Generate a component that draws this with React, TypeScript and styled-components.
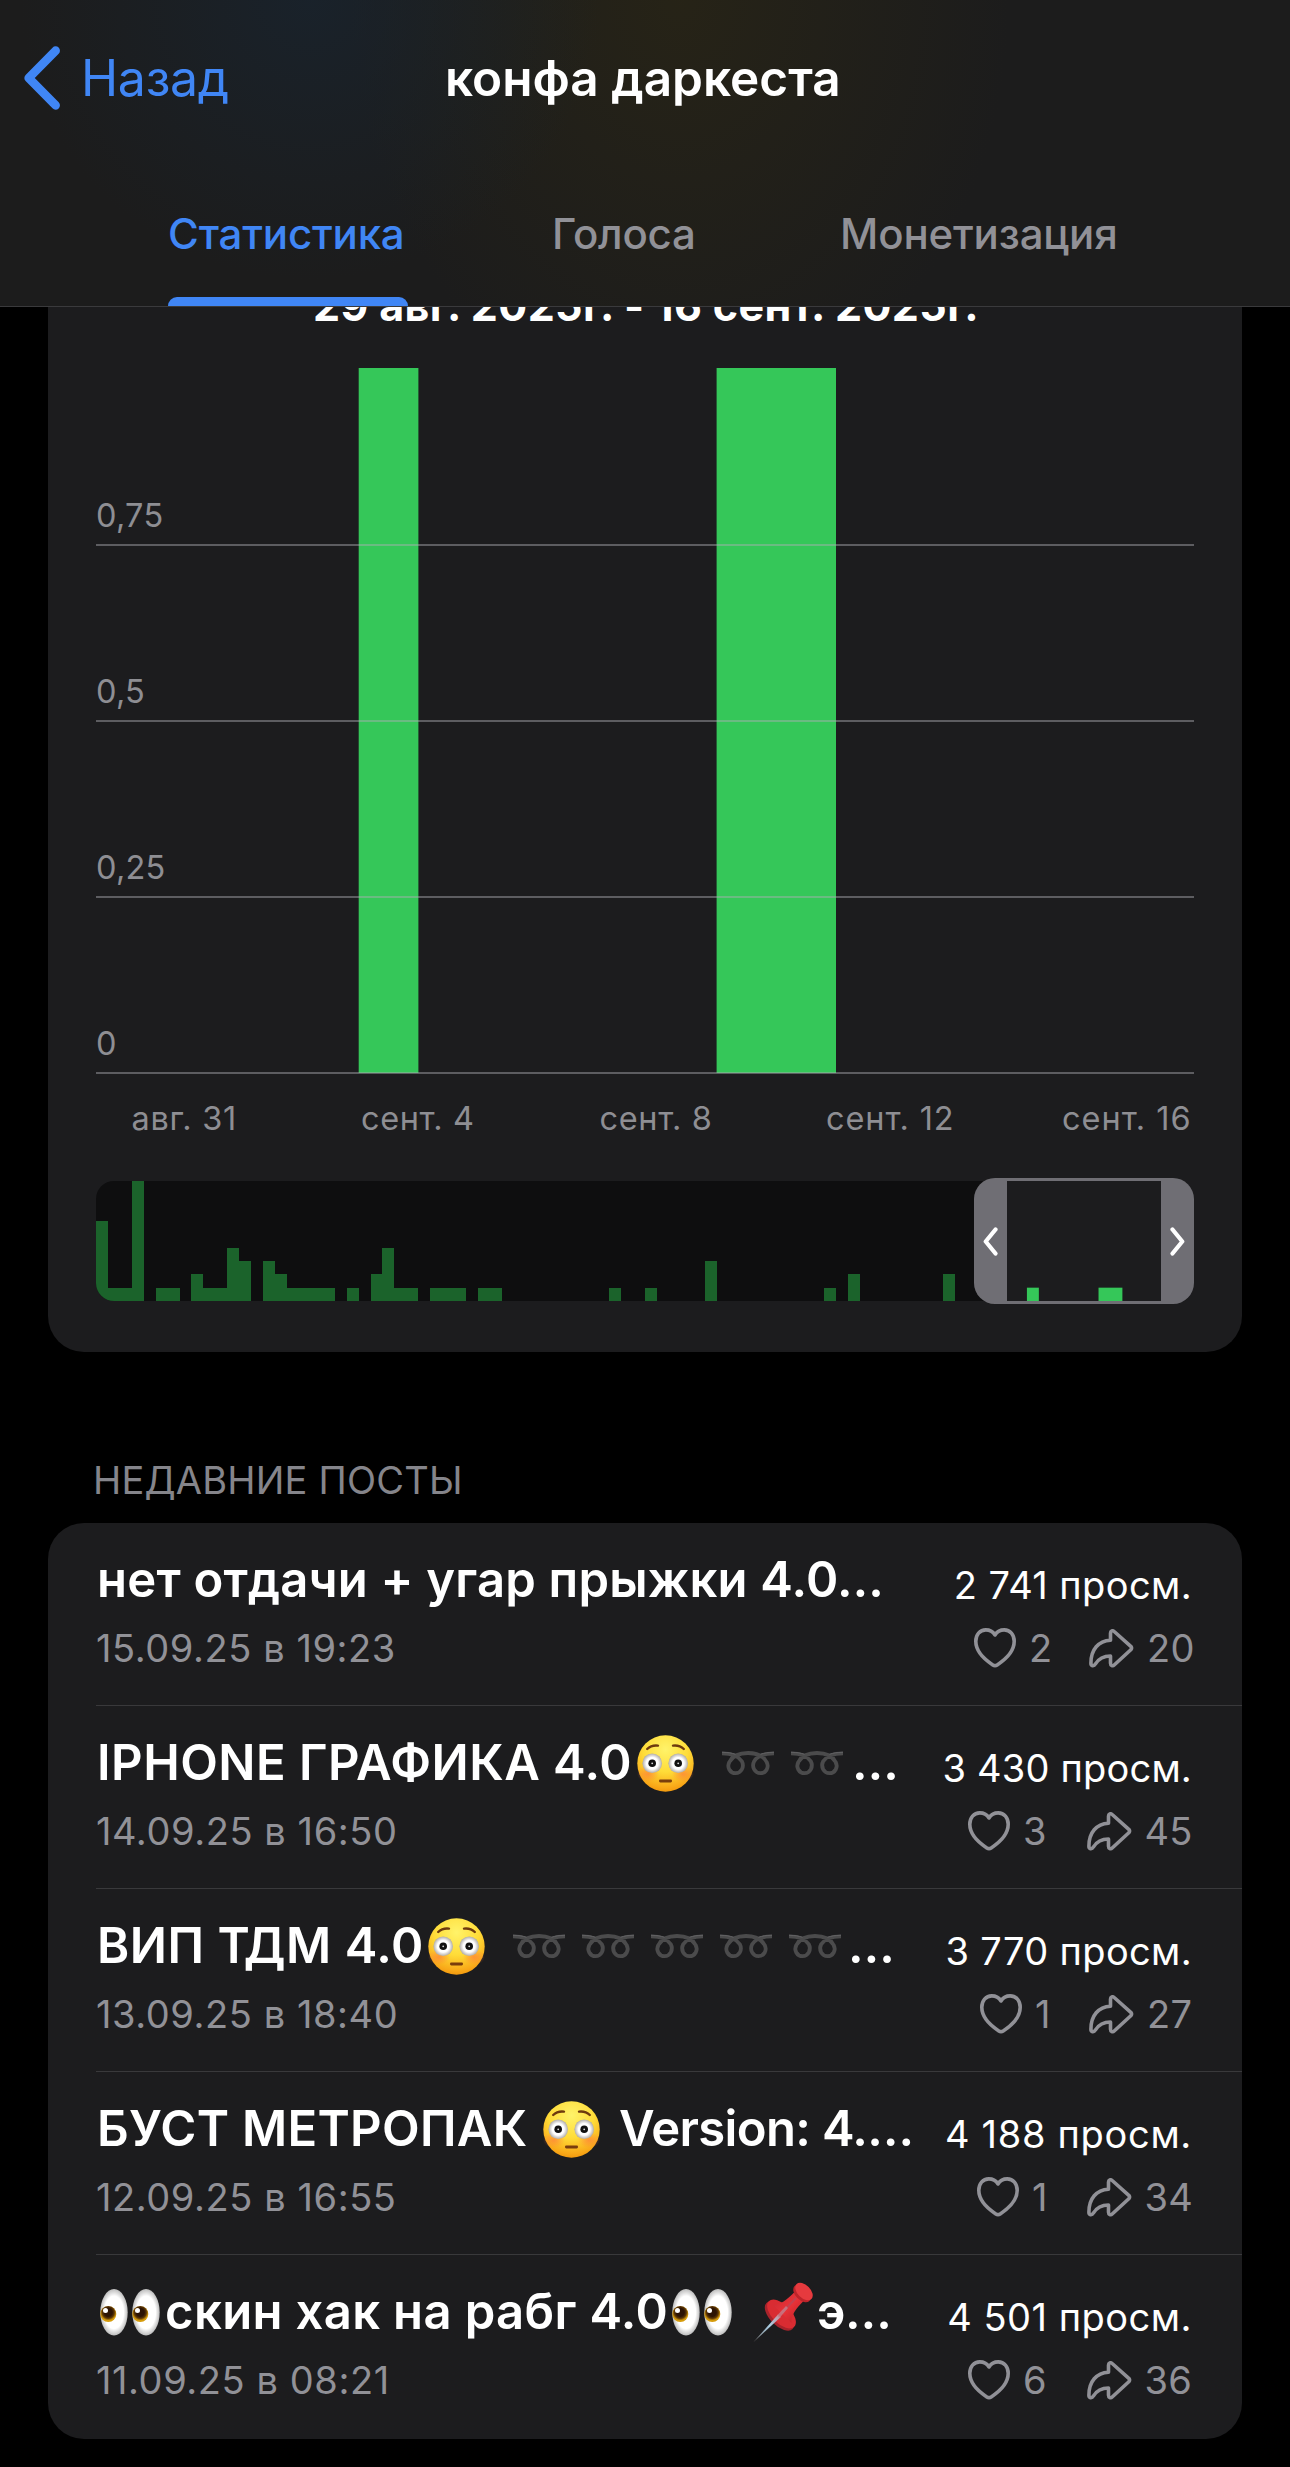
import React from "react";
import styled, { createGlobalStyle } from "styled-components";

const GlobalStyle = createGlobalStyle`
  * { box-sizing: border-box; }
  body {
    margin: 0;
    background: #000;
    color: #fff;
    font-family: Inter, "Liberation Sans", sans-serif;
  }
`;

const Page = styled.div`
  width: 1290px;
  height: 2467px;
  overflow: hidden;
  background: #000;
`;

const Header = styled.header`
  height: 307px;
  border-bottom: 1px solid #3a3a3c;
  background:
    radial-gradient(ellipse 290px 280px at 310px 0, rgba(24, 37, 50, 0.65), rgba(24, 37, 50, 0) 100%),
    radial-gradient(ellipse 330px 420px at 680px 0, rgba(44, 39, 20, 0.65), rgba(44, 39, 20, 0) 100%),
    #1c1c1c;
`;

const NavBar = styled.div`
  display: grid;
  grid-template-columns: 420px 450px 420px;
  align-items: center;
  height: 156px;
`;

const BackButton = styled.div`
  display: flex;
  align-items: center;
  gap: 21px;
  padding-left: 24px;
  color: #4086f5;
`;

const Text = styled.span<{ size: number; weight?: number; spacing?: number; color?: string; width?: number }>`
  display: block;
  flex: none;
  white-space: pre;
  line-height: 50px;
  font-size: ${(p) => p.size}px;
  font-weight: ${(p) => p.weight ?? 400};
  letter-spacing: ${(p) => p.spacing ?? 0}px;
  color: ${(p) => p.color ?? "inherit"};
  width: ${(p) => (p.width ? `${p.width}px` : "auto")};
`;

const NavTitle = styled.div`
  display: flex;
  justify-content: flex-start;
  padding-left: 25px;
`;

const Tabs = styled.nav`
  display: flex;
  gap: 144px;
  height: 150px;
  padding-left: 168px;
`;

const Tab = styled.div<{ $active?: boolean; $width: number }>`
  display: flex;
  flex-direction: column;
  justify-content: space-between;
  width: ${(p) => p.$width}px;
  padding-top: 53px;
  color: ${(p) => (p.$active ? "#4086f5" : "#919197")};
  &::after {
    content: "";
    height: 9px;
    border-radius: 9px 9px 0 0;
    background: ${(p) => (p.$active ? "#4086f5" : "transparent")};
  }
`;

const ChartCard = styled.section`
  height: 1045px;
  margin: 0 48px;
  padding: 0 48px;
  overflow: hidden;
  border-radius: 0 0 36px 36px;
  background: #1c1c1e;
`;

const ChartTitle = styled.div`
  display: flex;
  height: 50px;
  margin: -27px 0 38px;
  padding-left: 217px;
`;

const Plot = styled.svg`
  display: block;
  width: 1098px;
  height: 782px;
  overflow: visible;
`;

const AxisLabel = styled.text<{ $spacing?: number }>`
  fill: #8e8e93;
  font-size: 32.5px;
  letter-spacing: ${(p) => p.$spacing ?? 0}px;
`;

const RangeBar = styled.div`
  position: relative;
  height: 120px;
  margin-top: 31px;
`;

const Overview = styled.svg`
  display: block;
  width: 1098px;
  height: 120px;
  border-radius: 18px;
  background: #0e0e0f;
`;

const RangeWindow = styled.div`
  position: absolute;
  top: -3px;
  right: 0;
  display: flex;
  justify-content: space-between;
  width: 220px;
  height: 126px;
  overflow: hidden;
  border-radius: 21px;
  background: #1c1c1e;
`;

const Handle = styled.div`
  display: flex;
  align-items: center;
  justify-content: center;
  width: 33px;
  background: #6f6e74;
`;

const RangeBars = styled.svg`
  flex: 1;
  height: 126px;
  border-top: 3px solid #6f6e74;
  border-bottom: 3px solid #6f6e74;
`;

const SectionLabel = styled.h2`
  height: 171px;
  margin: 0;
  padding: 103px 0 0 93px;
`;

const PostList = styled.section`
  height: 916px;
  margin: 0 48px;
  padding-left: 48px;
  border-radius: 36px;
  background: #1c1c1e;
`;

const Post = styled.article`
  display: flex;
  justify-content: space-between;
  width: 1146px;
  height: 183px;
  padding-right: 50px;
  border-bottom: 1px solid #39393b;
  &:last-child { border-bottom-color: transparent; }
`;

const Main = styled.div`
  display: flex;
  flex-direction: column;
  gap: 18px;
  padding-top: 32px;
`;

const Side = styled.div`
  display: flex;
  flex-direction: column;
  align-items: flex-end;
  gap: 13px;
  padding-top: 37px;
`;

const TitleLine = styled.div`
  display: flex;
  align-items: center;
  height: 50px;
  padding-left: 1px;
`;

const Slot = styled.span<{ $left: number; $right: number }>`
  display: flex;
  flex: none;
  margin-left: ${(p) => p.$left}px;
  margin-right: ${(p) => p.$right}px;
`;

const Stats = styled.div`
  display: flex;
  align-items: center;
  height: 50px;
  color: #919197;
`;

const Count = styled.span<{ $width: number; $after?: number }>`
  width: ${(p) => p.$width}px;
  margin: 0 ${(p) => p.$after ?? 0}px 0 13px;
  font-size: 38px;
  line-height: 50px;
  letter-spacing: 0.3px;
  white-space: nowrap;
`;

const Face = () => (
  <svg width="57" height="57" viewBox="0 0 57 57" role="img" aria-label="😳">
    <defs>
      <radialGradient id="skin" cx="0.5" cy="0.25" r="0.8">
        <stop offset="0" stopColor="#fff36a" />
        <stop offset="0.5" stopColor="#ffdc38" />
        <stop offset="0.85" stopColor="#f9a818" />
        <stop offset="1" stopColor="#ee9008" />
      </radialGradient>
      <radialGradient id="cheek">
        <stop offset="0" stopColor="#ff7a3c" stopOpacity="0.65" />
        <stop offset="1" stopColor="#ff7a3c" stopOpacity="0" />
      </radialGradient>
      <radialGradient id="ball">
        <stop offset="0.6" stopColor="#fff" />
        <stop offset="1" stopColor="#b0aca8" />
      </radialGradient>
    </defs>
    <circle cx="28.5" cy="28.5" r="28.2" fill="url(#skin)" />
    <ellipse cx="11" cy="39" rx="11" ry="8" fill="url(#cheek)" />
    <ellipse cx="46" cy="39" rx="11" ry="8" fill="url(#cheek)" />
    {[15.2, 41.2].map((x) => (
      <g key={x}>
        <circle cx={x} cy="28.3" r="9.8" fill="url(#ball)" />
        <circle cx={x} cy="28.3" r="3.8" fill="#111" />
        <circle cx={x} cy="28.3" r="0.9" fill="#ddd" />
      </g>
    ))}
    <path d="M10.2 14 Q14.5 9.8 21 10.6 M36 10.6 Q42.5 9.8 46.8 14" fill="none" stroke="#6e3a0e" strokeWidth="2.4" strokeLinecap="round" />
    <rect x="22" y="44.4" width="13" height="3" rx="1.3" fill="#7a3d0c" />
  </svg>
);

const Loop = () => (
  <svg width="52" height="25" viewBox="0 0 52 25" role="img" aria-label="➿">
    <path
      d="M0 2.4C9 2.4 16.5 5 19.8 10.2C22.8 16 19 22.2 13.6 22.2C7.8 22.2 4.6 16 7.4 11C10.5 5 18 2 26 2C34 2 41.5 5 44.6 11C47.4 16 44.2 22.2 38.4 22.2C33 22.2 29.2 16 32.2 10.2C35.5 5 43 2.4 52 2.4"
      fill="none"
      stroke="#4b4b4c"
      strokeWidth="3.8"
    />
    <path d="M0 1.3C6 1.4 10 2 13.5 3.3M52 1.3C46 1.4 42 2 38.5 3.3" fill="none" stroke="#626264" strokeWidth="1" />
  </svg>
);

const Eyes = () => (
  <svg width="60" height="47" viewBox="0 0 60 47" role="img" aria-label="👀">
    <defs>
      <radialGradient id="white">
        <stop offset="0.7" stopColor="#fff" />
        <stop offset="1" stopColor="#bdbdbd" />
      </radialGradient>
      <radialGradient id="iris" cx="0.5" cy="0.4">
        <stop offset="0.5" stopColor="#2d1404" />
        <stop offset="0.75" stopColor="#5c3603" />
        <stop offset="1" stopColor="#d59b0c" />
      </radialGradient>
    </defs>
    {[0, 32].map((dx) => (
      <g key={dx} transform={`translate(${dx} 0)`}>
        <ellipse cx="14" cy="23.3" rx="13.7" ry="23.2" fill="url(#white)" />
        <circle cx="8.3" cy="25" r="8" fill="url(#iris)" />
        <circle cx="5.5" cy="21.5" r="2.5" fill="#fff" />
      </g>
    ))}
  </svg>
);

const Pin = () => (
  <svg width="61" height="61" viewBox="0 0 61 61" role="img" aria-label="📌">
    <defs>
      <linearGradient id="needle" x1="0" y1="1" x2="1" y2="0">
        <stop offset="0" stopColor="#77706e" />
        <stop offset="0.6" stopColor="#a9cfe6" />
        <stop offset="1" stopColor="#c98a94" />
      </linearGradient>
      <linearGradient id="barrel" x1="0" y1="0" x2="1" y2="1">
        <stop offset="0" stopColor="#c22a31" />
        <stop offset="0.5" stopColor="#e83238" />
        <stop offset="1" stopColor="#b81e24" />
      </linearGradient>
    </defs>
    <ellipse cx="26.5" cy="34" rx="18.5" ry="9.5" transform="rotate(45 26.5 34)" fill="#a8232b" />
    <ellipse cx="28.5" cy="32" rx="18" ry="9.5" transform="rotate(45 28.5 32)" fill="#d92c32" />
    <path d="M20 23 C28 23 34 17.500 42 9.500 L51 18.500 C43 26.500 38 33 38.500 41 Z" fill="url(#barrel)" />
    <ellipse cx="49" cy="11.5" rx="10.500" ry="6.5" transform="rotate(45 49 11.5)" fill="#bd242a" />
    <ellipse cx="51" cy="9.5" rx="10.500" ry="6.500" transform="rotate(45 51 9.5)" fill="#e63a3e" />
    <path d="M29 31 L43 16" stroke="#b5495a" strokeWidth="2" opacity="0.7" />
    <path d="M0.5 60 L25 32.5 L27.8 35 Z" fill="url(#needle)" />
    <path d="M24 33.5 L33 24 L35 26 L26.5 36 Z" fill="#c77d8a" opacity="0.8" />
  </svg>
);

const Heart = () => (
  <svg width="42" height="40" viewBox="0 0 42 40" fill="none" stroke="currentColor" strokeWidth="3.6" strokeLinejoin="round">
    <path d="M21 6.9C18.8 3.5 15.5 1.9 11.8 1.9C5.8 1.9 1.8 6.8 1.8 13.3C1.8 24.5 10.5 31.5 18.8 36.9Q21 38.3 23.2 36.9C31.5 31.5 40.2 24.5 40.2 13.3C40.2 6.8 36.2 1.9 30.2 1.9C26.5 1.9 23.2 3.5 21 6.9Z" />
  </svg>
);

const Share = () => (
  <svg width="45" height="39" viewBox="0 0 45 39" fill="none" stroke="currentColor" strokeWidth="3.6" strokeLinejoin="round">
    <path d="M21.5 11.2V4.2C21.5 1.9 23.7 1.1 25.2 2.5L41.8 17.3Q43.3 19 41.8 20.7L25.2 36C23.7 37.4 21.5 36.6 21.5 34.3V27C14 27 9.8 29.5 6.5 34.9C4.8 37.6 1.9 37 1.9 34.2C1.9 20.5 9.5 11.7 21.5 11.2Z" />
  </svg>
);

const Chevron = ({ flip }: { flip?: boolean }) => (
  <svg width="15" height="29" viewBox="0 0 15 29" fill="none" stroke="#fff" strokeWidth="4.2" strokeLinecap="round" strokeLinejoin="round">
    <path d={flip ? "M2.5 2.5L12.3 14.5L2.5 26.5" : "M12.5 2.5L2.7 14.5L12.5 26.5"} />
  </svg>
);

const STEP = 1098 / 92;
const UNIT = 120 / 9;

const history: number[] = [
  6, 1, 1, 9, 0, 1, 1, 0, 2, 1, 1, 4, 3, 0, 3, 2, 1, 1, 1, 1, 0, 1, 0, 2, 4, 1, 1, 0, 1, 1, 1, 0, 1, 1, 0, 0, 0, 0,
  0, 0, 0, 0, 0, 1, 0, 0, 1, 0, 0, 0, 0, 3, 0, 0, 0, 0, 0, 0, 0, 0, 0, 1, 0, 2, 0, 0, 0, 0, 0, 0, 0, 2,
];

const historyPath = history
  .map((v, i) => (v ? `M${i * STEP} 120v${-v * UNIT}h${STEP}v${v * UNIT}z` : ""))
  .join("");

const selected = [{ day: 78, days: 1 }, { day: 84, days: 2 }];

const ticks = [
  { label: "0,75", y: 177 },
  { label: "0,5", y: 353 },
  { label: "0,25", y: 529 },
  { label: "0", y: 705 },
];

const days = [
  { label: "авг. 31", x: 35.5, spacing: 0.7 },
  { label: "сент. 4", x: 265, spacing: 0.6 },
  { label: "сент. 8", x: 503.5, spacing: 0.65 },
  { label: "сент. 12", x: 730, spacing: 0.9 },
  { label: "сент. 16", x: 966, spacing: 1 },
];

type Part =
  | { text: string; width: number; spacing?: number }
  | { icon: "face" | "loop" | "eyes" | "pin"; left?: number; right?: number };

const icons = { face: Face, loop: Loop, eyes: Eyes, pin: Pin };

type PostData = {
  title: Part[];
  date: string;
  views: string;
  viewsSpacing: number;
  likes: number;
  likesWidth: number;
  shares: number;
  sharesWidth: number;
};

const posts: PostData[] = [
  {
    title: [{ text: "нет отдачи + угар прыжки 4.0…", width: 790, spacing: 0.2 }],
    date: "15.09.25 в 19:23", views: "2 741 просм.", viewsSpacing: 0.4,
    likes: 2, likesWidth: 24, shares: 20, sharesWidth: 45,
  },
  {
    title: [
      { text: "IPHONE ГРАФИКА 4.0", width: 540, spacing: 0.48 },
      { icon: "face" },
      { icon: "loop", left: 28 },
      { icon: "loop", left: 17, right: 9 },
      { text: "…", width: 45 },
    ],
    date: "14.09.25 в 16:50", views: "3 430 просм.", viewsSpacing: 0.2,
    likes: 3, likesWidth: 27.5, shares: 45, sharesWidth: 47.5,
  },
  {
    title: [
      { text: "ВИП ТДМ 4.0", width: 331, spacing: 0.55 },
      { icon: "face" },
      { icon: "loop", left: 28 },
      { icon: "loop", left: 17 },
      { icon: "loop", left: 17 },
      { icon: "loop", left: 17 },
      { icon: "loop", left: 17, right: 7 },
      { text: "…", width: 45 },
    ],
    date: "13.09.25 в 18:40", views: "3 770 просм.", viewsSpacing: 0.35,
    likes: 1, likesWidth: 18, shares: 27, sharesWidth: 45,
  },
  {
    title: [
      { text: "БУСТ МЕТРОПАК", width: 446, spacing: 0.3 },
      { icon: "face", right: 19 },
      { text: "Version: 4.…", width: 296, spacing: -0.65 },
    ],
    date: "12.09.25 в 16:55", views: "4 188 просм.", viewsSpacing: 0.7,
    likes: 1, likesWidth: 18.5, shares: 34, sharesWidth: 47.5,
  },
  {
    title: [
      { icon: "eyes", left: 3, right: 5 },
      { text: "скин хак на рабг 4.0", width: 507, spacing: 0.35 },
      { icon: "eyes", right: 21 },
      { icon: "pin", right: 3 },
      { text: "э…", width: 76, spacing: -0.5 },
    ],
    date: "11.09.25 в 08:21", views: "4 501 просм.", viewsSpacing: 0.5,
    likes: 6, likesWidth: 27.5, shares: 36, sharesWidth: 47.5,
  },
];

const Title = ({ parts }: { parts: Part[] }) => (
  <TitleLine>
    {parts.map((part, i) => {
      if ("text" in part) {
        return (
          <Text key={i} size={49} weight={600} spacing={part.spacing} width={part.width}>
            {part.text}
          </Text>
        );
      }
      const Icon = icons[part.icon];
      return (
        <Slot key={i} $left={part.left ?? 0} $right={part.right ?? 0}>
          <Icon />
        </Slot>
      );
    })}
  </TitleLine>
);

export default function App() {
  return (
    <Page>
      <GlobalStyle />
      <Header>
        <NavBar>
          <BackButton>
            <svg width="36" height="64" viewBox="0 0 36 64" fill="none" stroke="currentColor" strokeWidth="8.7" strokeLinecap="round" strokeLinejoin="round">
              <path d="M31.6 4.7L4.7 32L31.6 59.3" />
            </svg>
            <Text size={50} spacing={-0.3}>Назад</Text>
          </BackButton>
          <NavTitle>
            <Text size={49.5} weight={600}>конфа даркеста</Text>
          </NavTitle>
        </NavBar>
        <Tabs>
          <Tab $active $width={240}><Text size={42} weight={500} spacing={-0.15}>Статистика</Text></Tab>
          <Tab $width={144}><Text size={42} weight={500} spacing={-0.2}>Голоса</Text></Tab>
          <Tab $width={279}><Text size={42} weight={500} spacing={-0.15}>Монетизация</Text></Tab>
        </Tabs>
      </Header>

      <ChartCard>
        <ChartTitle>
          <Text size={43} weight={700} spacing={0.36}>29 авг. 2025г. - 16 сент. 2025г.</Text>
        </ChartTitle>
        <Plot viewBox="0 0 1098 782">
          <rect x="262.7" y="0" width="59.7" height="705" fill="#35c759" />
          <rect x="620.6" y="0" width="119.4" height="705" fill="#35c759" />
          {ticks.map((t) => (
            <g key={t.label}>
              <rect x="0" y={t.y - 1} width="1098" height="2" fill="rgba(174,174,180,0.45)" />
              <AxisLabel x="0" y={t.y - 18} $spacing={0.25}>{t.label}</AxisLabel>
            </g>
          ))}
          {days.map((d) => (
            <AxisLabel key={d.label} x={d.x} y="762" $spacing={d.spacing}>{d.label}</AxisLabel>
          ))}
        </Plot>
        <RangeBar>
          <Overview viewBox="0 0 1098 120">
            <path d={historyPath} fill="#1b632b" shapeRendering="crispEdges" />
          </Overview>
          <RangeWindow>
            <Handle><Chevron /></Handle>
            <RangeBars viewBox="911 0 154 120">
              {selected.map((s) => (
                <rect key={s.day} x={s.day * STEP} y={120 - UNIT} width={s.days * STEP} height={UNIT} fill="#35c759" />
              ))}
            </RangeBars>
            <Handle><Chevron flip /></Handle>
          </RangeWindow>
        </RangeBar>
      </ChartCard>

      <SectionLabel>
        <Text size={38} spacing={0.2} color="#85858b">НЕДАВНИЕ ПОСТЫ</Text>
      </SectionLabel>

      <PostList>
        {posts.map((p) => (
          <Post key={p.date}>
            <Main>
              <Title parts={p.title} />
              <Text size={38} spacing={0.57} color="#919197">{p.date}</Text>
            </Main>
            <Side>
              <Text size={38} spacing={p.viewsSpacing}>{p.views}</Text>
              <Stats>
                <Heart />
                <Count $width={p.likesWidth} $after={36}>{p.likes}</Count>
                <Share />
                <Count $width={p.sharesWidth}>{p.shares}</Count>
              </Stats>
            </Side>
          </Post>
        ))}
      </PostList>
    </Page>
  );
}
